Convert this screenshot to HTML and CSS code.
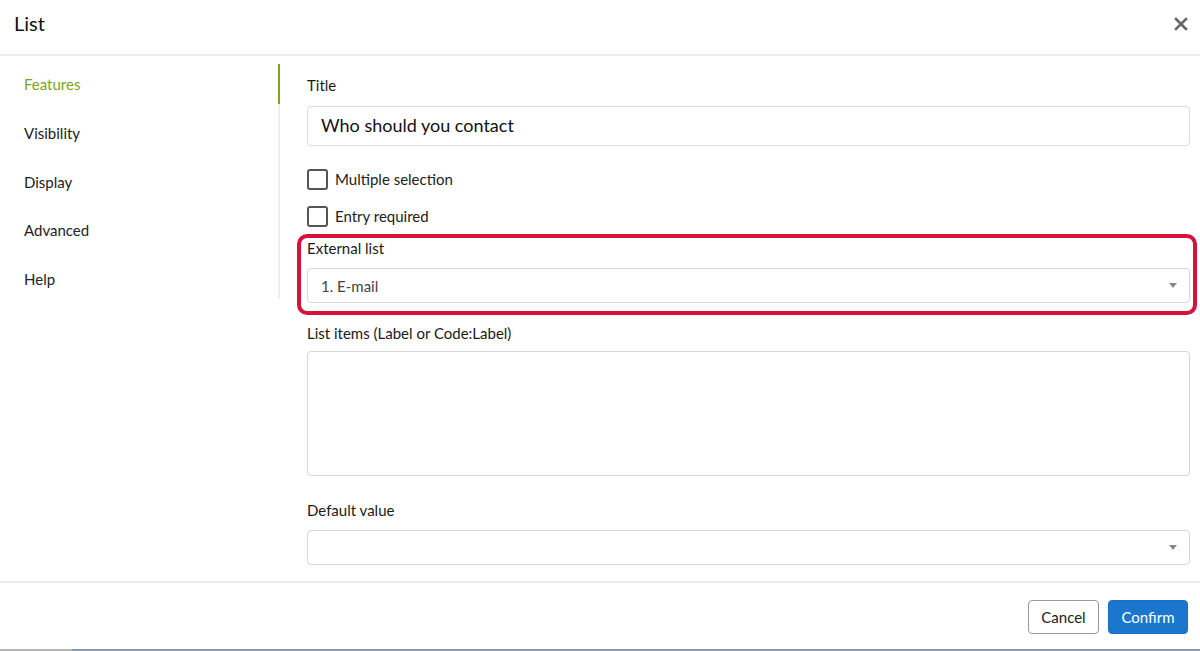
FILE: index.html
```html
<!DOCTYPE html>
<html>
<head>
<meta charset="utf-8">
<link rel="stylesheet" href="styles.css">
</head>
<body>
<div class="dialog">
  <header class="head">
    <h1 class="title">List</h1>
    <button class="close" aria-label="Close">
      <svg width="14" height="14" viewBox="0 0 14 14"><path d="M2 2 L12 12 M12 2 L2 12" stroke="#666" stroke-width="2.6" stroke-linecap="square"/></svg>
    </button>
  </header>
  <div class="body">
    <nav class="side">
      <ul class="nav">
        <li class="nav-item active">Features</li>
        <li class="nav-item">Visibility</li>
        <li class="nav-item">Display</li>
        <li class="nav-item">Advanced</li>
        <li class="nav-item">Help</li>
      </ul>
    </nav>
    <main class="main">
      <label class="label lbl-title">Title</label>
      <div class="input">Who should you contact</div>
      <div class="check cb1"><span class="box"></span><span>Multiple selection</span></div>
      <div class="check cb2"><span class="box"></span><span>Entry required</span></div>
      <div class="highlight">
        <label class="label">External list</label>
        <div class="select"><span>1. E-mail</span><span class="caret"></span></div>
      </div>
      <label class="label lbl-items">List items (Label or Code:Label)</label>
      <div class="textarea"></div>
      <label class="label lbl-default">Default value</label>
      <div class="select"><span></span><span class="caret"></span></div>
    </main>
  </div>
  <footer class="foot">
    <button class="btn btn-cancel">Cancel</button>
    <button class="btn btn-confirm">Confirm</button>
  </footer>
  <div class="strip"><span class="strip-a"></span><span class="strip-b"></span></div>
</div>
</body>
</html>
```
FILE: styles.css
```css
* { box-sizing: border-box; }
html, body { margin: 0; padding: 0; }
body {
  font-family: Lato, "Open Sans", "Liberation Sans", sans-serif;
  color: #222;
  background: #fff;
  width: 1200px;
  height: 651px;
  overflow: hidden;
}
.dialog { display: flex; flex-direction: column; height: 651px; }
.head {
  height: 56px;
  border-bottom: 2px solid #eeeeee;
  display: flex;
  align-items: center;
  justify-content: space-between;
  padding: 0 12px 6px 14px;
}
.title { margin: 0; font-size: 20px; font-weight: 400; color: #111; line-height: 24px; margin-top: -2px; }
.close { border: 0; background: none; padding: 0; width: 14px; height: 14px; display: flex; cursor: pointer; }
.body { height: 525px; display: flex; }
.side { width: 280px; flex: none; padding-top: 8px; }
.nav {
  list-style: none; margin: 0; padding: 0;
  border-right: 2px solid #eeeeee;
}
.nav-item {
  height: 40px; line-height: 40px;
  margin-bottom: 8.75px;
  padding-left: 24px;
  font-size: 15px;
  color: #222;
}
.nav-item.active {
  color: #7aa51e;
  margin-right: -2px;
  border-right: 2px solid #7aa51e;
}
.main {
  flex: 1;
  padding: 19px 10px 0 27px;
  display: flex;
  flex-direction: column;
}
.label { font-size: 15px; line-height: 20px; color: #1a1a1a; display: block; }
.input {
  margin-top: 11px;
  height: 40px;
  border: 1px solid #dcdcdc;
  border-radius: 4px;
  padding: 0 13px;
  font-size: 18px;
  line-height: 36px;
  color: #111;
}
.check { display: flex; align-items: center; gap: 7px; font-size: 15px; height: 21px; line-height: 19px; }
.cb1 { margin-top: 23px; }
.cb2 { margin-top: 16px; }
.box { width: 21px; height: 21px; border: 2px solid #555; border-radius: 3px; flex: none; }
.highlight {
  margin: 7px -7px 0 -10px;
  border: 4px solid #d7123b;
  border-radius: 10px;
  padding: 0 3px 8px 6px;
}
.select {
  margin-top: 10px;
  height: 35px;
  border: 1px solid #d6d6d6;
  border-radius: 4px;
  padding: 0 12px 0 13px;
  display: flex;
  align-items: center;
  justify-content: space-between;
  font-size: 15px;
  color: #444;
}
.caret {
  width: 0; height: 0;
  border-left: 4.5px solid transparent;
  border-right: 4.5px solid transparent;
  border-top: 5px solid #888;
}
.lbl-items { margin-top: 8px; }
.textarea {
  margin-top: 8px;
  height: 125px;
  border: 1px solid #d6d6d6;
  border-radius: 4px;
}
.lbl-default { margin-top: 24px; }
.foot {
  height: 68px;
  border-top: 2px solid #eeeeee;
  display: flex;
  justify-content: flex-end;
  align-items: flex-start;
  gap: 9px;
  padding: 17px 12px 0 0;
}
.btn {
  height: 34px;
  border-radius: 4px;
  font-family: inherit;
  font-size: 15px;
  padding: 0;
}
.btn-cancel { width: 71px; background: #fff; border: 1px solid #999; color: #222; }
.btn-confirm { width: 80px; background: #1b77cd; border: 1px solid #1a6fc2; color: #fff; }
.strip { height: 2px; display: flex; }
.strip-a { width: 72px; background: #b5b5b5; }
.strip-b { flex: 1; background: #8a9cb4; }
```
